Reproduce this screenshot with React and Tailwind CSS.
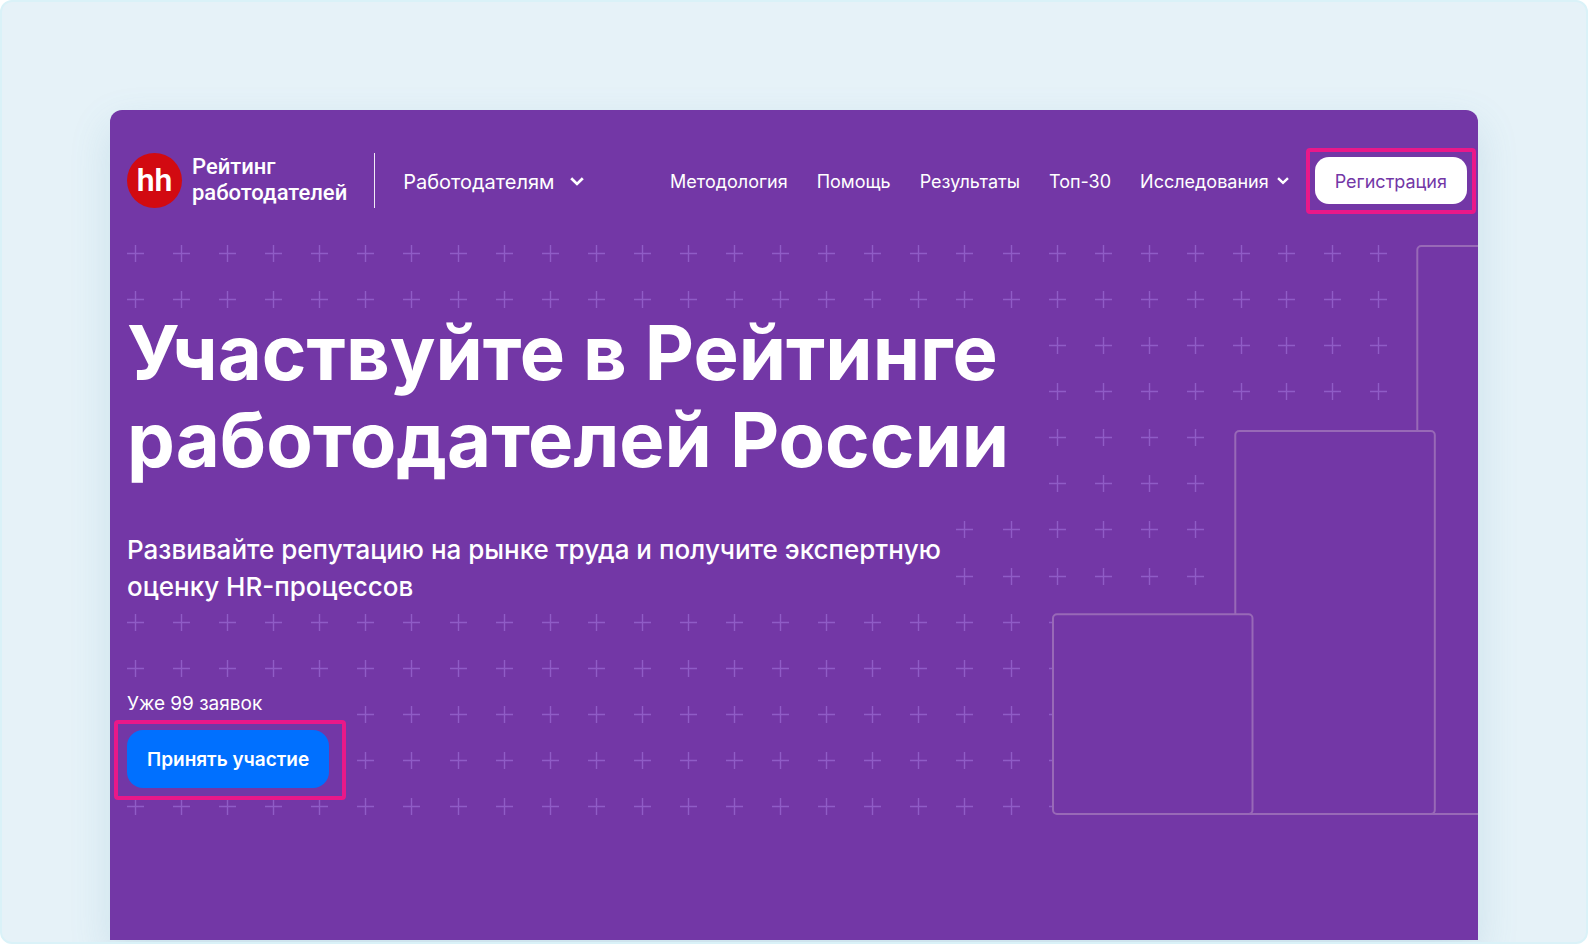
const navLinks = ['Методология', 'Помощь', 'Результаты', 'Топ-30'];

// rows of the cross grid: [first column, last column]
const crossRows = [
  [0, 27],
  [0, 27],
  [20, 27],
  [20, 27],
  [20, 23],
  [20, 23],
  [18, 23],
  [18, 23],
  [0, 20],
  [0, 20],
  [5, 20],
  [5, 20],
  [0, 20],
];

const STEP = 46.08;

const crosses = crossRows.flatMap(([from, to], row) =>
  Array.from({ length: to - from + 1 }, (_, i) => {
    const col = from + i;
    const x = Math.round(17 + col * STEP - (col > 24 ? 1 : 0));
    const y = Math.round(row * STEP);
    return `M${x} ${y + 8.5}h17M${x + 8.5} ${y}v17`;
  })
);

function Chevron({ className }) {
  return (
    <svg viewBox="0 0 14 9" fill="none" className={className} aria-hidden="true">
      <path d="M1.2 1.3 7 6.9l5.8-5.6" stroke="currentColor" strokeWidth="2.8" />
    </svg>
  );
}

function Logo() {
  return (
    <a href="#" className="flex items-center gap-[10px]">
      <span className="flex size-[55px] items-center justify-center rounded-full bg-[#d20a11] font-[Roboto,sans-serif] text-[32px] leading-none font-semibold">
        hh
      </span>
      <span className="font-[Roboto,sans-serif] text-[22px] leading-[26px] font-medium">
        Рейтинг
        <br />
        работодателей
      </span>
    </a>
  );
}

function Header() {
  return (
    <header className="flex items-center justify-between pr-[2px] pl-[17px] whitespace-nowrap">
      <div className="flex items-center pb-[2px]">
        <Logo />
        <div className="ml-[27px] h-[55px] w-px bg-white/90" />
        <button className="ml-7 flex items-center gap-4 pt-1 text-[20px] leading-6">
          Работодателям
          <Chevron className="mb-[2px] w-[14px]" />
        </button>
      </div>
      <div className="flex items-center">
        <nav className="flex items-center gap-[29px] pt-[2px] text-[18px] leading-6">
          {navLinks.map((link) => (
            <a key={link} href="#">
              {link}
            </a>
          ))}
          <button className="flex items-center gap-2">
            Исследования
            <Chevron className="mb-[2px] w-3" />
          </button>
        </nav>
        <div className="ml-[17px] rounded-[4px] border-4 border-[#ea1889] px-[5px] pt-[5px] pb-[6px]">
          <button className="h-[47px] rounded-[14px] bg-white px-5 pt-[2px] text-[18px] leading-6 text-[#7337a6]">
            Регистрация
          </button>
        </div>
      </div>
    </header>
  );
}

function Pattern() {
  return (
    <svg className="absolute inset-0 size-full" aria-hidden="true">
      <path d={crosses.join('')} fill="none" stroke="#8f5cc6" strokeWidth="1.4" />
      <g fill="#7337a6" stroke="#9869b7" strokeWidth="2">
        <rect x="1307.3" y="1" width="200" height="568" rx="4" />
        <rect x="1125.3" y="186" width="199.5" height="383" rx="4" />
        <rect x="943" y="369.3" width="199.5" height="199.7" rx="4" />
      </g>
    </svg>
  );
}

function Hero() {
  return (
    <section className="relative mt-[31px] pb-4">
      <Pattern />
      <div className="relative px-[17px] pt-16">
        <h1 className="text-[76px] leading-[87px] font-bold">
          Участвуйте в Рейтинге
          <br />
          работодателей России
        </h1>
        <p className="mt-12 text-[26px] leading-[37px] font-medium">
          Развивайте репутацию на рынке труда и получите экспертную
          <br />
          оценку HR-процессов
        </p>
        <p className="mt-[87px] text-[19px] leading-6">Уже 99 заявок</p>
        <div className="mt-1 -ml-[13px] w-fit rounded-[4px] border-4 border-[#ea1889] bg-[#7337a6] pt-[6px] pr-[13px] pb-2 pl-[9px]">
          <button className="h-[58px] rounded-2xl bg-[#0070ff] px-5 pt-[2px] text-[19px] leading-6 font-semibold">
            Принять участие
          </button>
        </div>
      </div>
    </section>
  );
}

export default function App() {
  return (
    <div className="flex min-h-screen flex-col overflow-hidden rounded-xl border-2 border-[#daf2f8] bg-[#e6f2f8] px-[108px] pt-[108px] pb-[2px] font-[Inter,sans-serif] text-white">
      <main className="flex-1 overflow-hidden rounded-t-xl bg-[#7337a6] pt-[38px] shadow-[0_16px_40px_rgba(80,150,180,0.18)]">
        <Header />
        <Hero />
      </main>
    </div>
  );
}
